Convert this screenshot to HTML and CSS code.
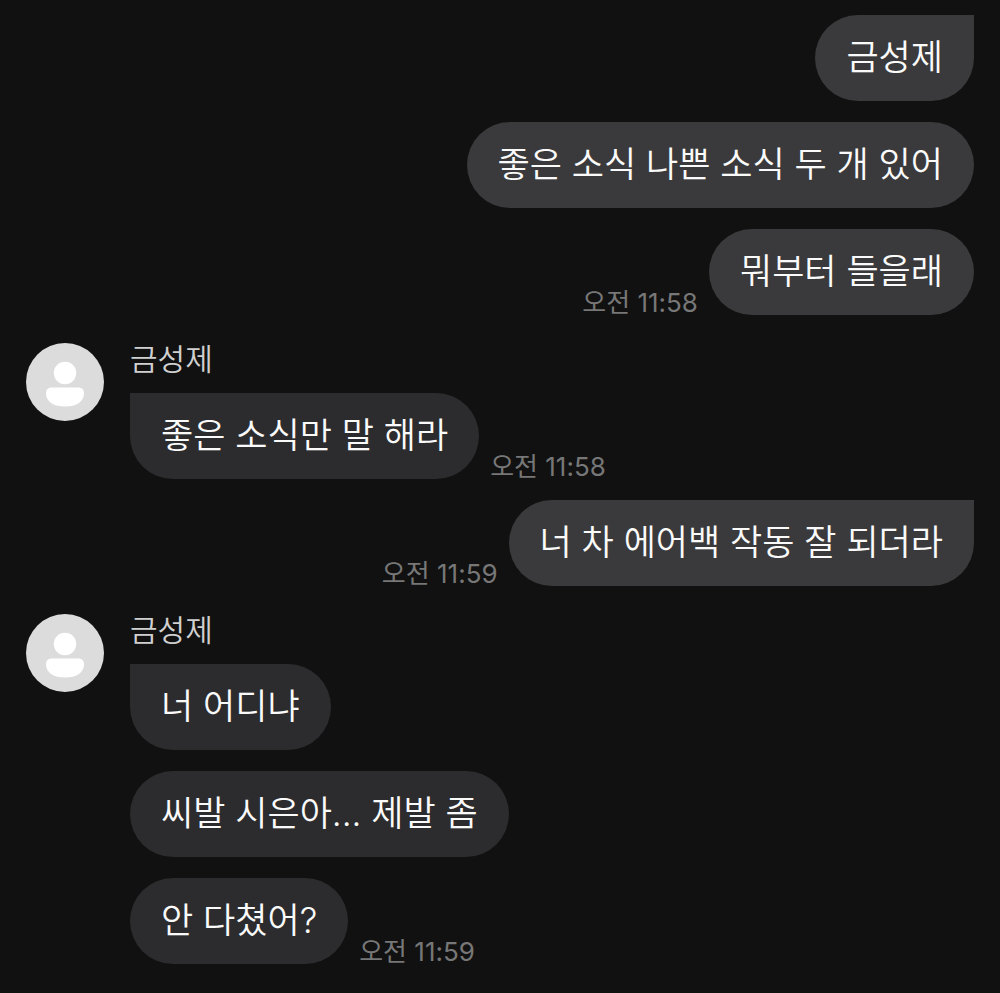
FILE: index.html
```html
<!DOCTYPE html>
<html lang="ko">

<head>
    <meta charset="UTF-8">
    <meta name="viewport" content="width=device-width, initial-scale=1.0">
    <title>금성제</title>
    <link rel="stylesheet" href="styles.css">
</head>

<body>
    <main class="chat">
        <section class="group mine">
            <div class="row">
                <p class="bubble first">금성제</p>
            </div>
            <div class="row">
                <p class="bubble">좋은 소식 나쁜 소식 두 개 있어</p>
            </div>
            <div class="row">
                <p class="bubble">뭐부터 들을래</p>
                <time class="time">오전 11:58</time>
            </div>
        </section>

        <section class="group theirs">
            <svg class="avatar" viewBox="0 0 78 78" aria-hidden="true">
                <circle cx="39" cy="39" r="39" fill="#dcdcdc" />
                <circle cx="39" cy="30" r="11.2" fill="#fff" />
                <path d="M26 44.5h26c4 0 6 2 6 6C58 59 50 63.5 39 63.5S20 59 20 50.5c0-4 2-6 6-6z" fill="#fff" />
            </svg>
            <div class="messages">
                <h2 class="name">금성제</h2>
                <div class="row">
                    <p class="bubble first">좋은 소식만 말 해라</p>
                    <time class="time">오전 11:58</time>
                </div>
            </div>
        </section>

        <section class="group mine">
            <div class="row">
                <p class="bubble first">너 차 에어백 작동 잘 되더라</p>
                <time class="time">오전 11:59</time>
            </div>
        </section>

        <section class="group theirs">
            <svg class="avatar" viewBox="0 0 78 78" aria-hidden="true">
                <circle cx="39" cy="39" r="39" fill="#dcdcdc" />
                <circle cx="39" cy="30" r="11.2" fill="#fff" />
                <path d="M26 44.5h26c4 0 6 2 6 6C58 59 50 63.5 39 63.5S20 59 20 50.5c0-4 2-6 6-6z" fill="#fff" />
            </svg>
            <div class="messages">
                <h2 class="name">금성제</h2>
                <div class="row">
                    <p class="bubble first">너 어디냐</p>
                </div>
                <div class="row">
                    <p class="bubble">씨발 시은아... 제발 좀</p>
                </div>
                <div class="row">
                    <p class="bubble">안 다쳤어?</p>
                    <time class="time">오전 11:59</time>
                </div>
            </div>
        </section>
    </main>
</body>

</html>
```
FILE: styles.css
```css
* {
    box-sizing: border-box;
}

body {
    margin: 0;
    background-color: #111;
    color: #fafafa;
    font-family: Inter, "Noto Sans CJK KR", sans-serif;
    font-weight: 350;
}

.chat {
    display: flex;
    flex-direction: column;
    gap: 21px;
    padding: 15px 26px 30px;
}

.group {
    display: flex;
}

.mine,
.messages {
    display: flex;
    flex-direction: column;
    gap: 21px;
}

.theirs {
    gap: 26px;
    padding-top: 7px;
}

.row {
    display: flex;
    align-items: flex-end;
    gap: 11px;
}

.mine .row {
    flex-direction: row-reverse;
}

.bubble {
    margin: 0;
    padding: 18px 31px 20px;
    border-radius: 43px;
    background-color: #2c2c2e;
    font-size: 35px;
    line-height: 48px;
}

.mine .bubble {
    background-color: #3a3a3c;
}

.mine .first {
    border-top-right-radius: 0;
}

.theirs .first {
    border-top-left-radius: 0;
}

.avatar {
    flex: none;
    width: 78px;
    height: 78px;
}

.name {
    margin: 0 0 -3px;
    color: #d0d0d0;
    font-size: 30px;
    font-weight: 350;
    line-height: 32px;
}

.time {
    color: #777;
    font-size: 26px;
    font-weight: 400;
    line-height: 24px;
    white-space: nowrap;
}
```
